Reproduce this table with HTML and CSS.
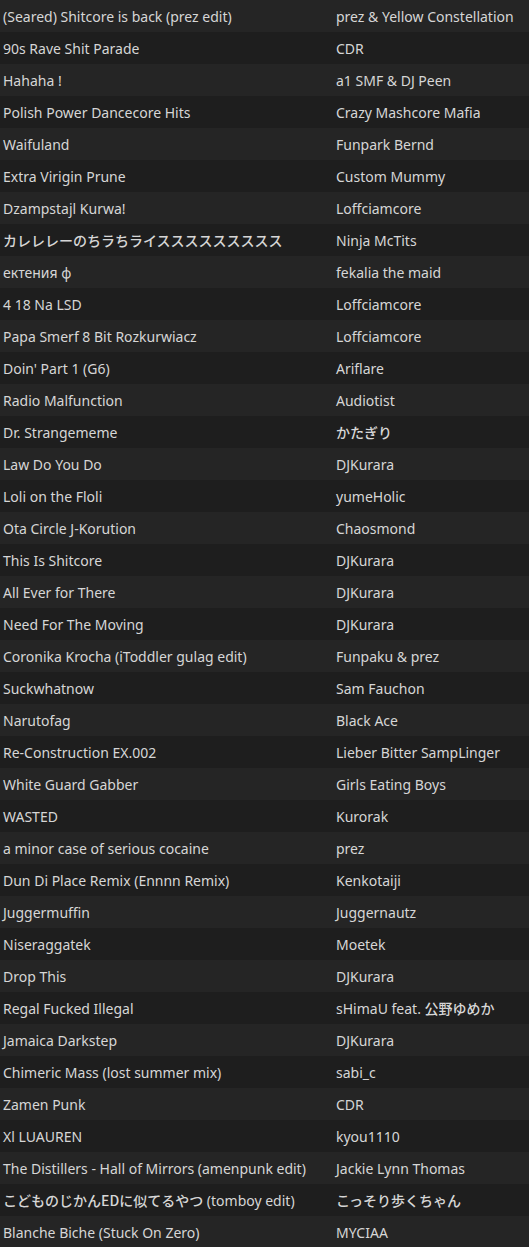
FILE: index.html
```html
<!DOCTYPE html>
<html lang="en">
<head>
<meta charset="utf-8">
<title>Tracks</title>
<link rel="stylesheet" href="styles.css">
</head>
<body>
<div class="tracks">
  <div class="row"><span class="title">(Seared) Shitcore is back (prez edit)</span><span class="artist">prez &amp; Yellow Constellation</span></div>
  <div class="row"><span class="title">90s Rave Shit Parade</span><span class="artist">CDR</span></div>
  <div class="row"><span class="title">Hahaha !</span><span class="artist">a1 SMF &amp; DJ Peen</span></div>
  <div class="row"><span class="title">Polish Power Dancecore Hits</span><span class="artist">Crazy Mashcore Mafia</span></div>
  <div class="row"><span class="title">Waifuland</span><span class="artist">Funpark Bernd</span></div>
  <div class="row"><span class="title">Extra Virigin Prune</span><span class="artist">Custom Mummy</span></div>
  <div class="row"><span class="title">Dzampstajl Kurwa!</span><span class="artist">Loffciamcore</span></div>
  <div class="row"><span class="title"><span class="jp">カレレレーのちラちライススススススススス</span></span><span class="artist">Ninja McTits</span></div>
  <div class="row"><span class="title">ектения ɸ</span><span class="artist">fekalia the maid</span></div>
  <div class="row"><span class="title">4 18 Na LSD</span><span class="artist">Loffciamcore</span></div>
  <div class="row"><span class="title">Papa Smerf 8 Bit Rozkurwiacz</span><span class="artist">Loffciamcore</span></div>
  <div class="row"><span class="title">Doin' Part 1 (G6)</span><span class="artist">Ariflare</span></div>
  <div class="row"><span class="title">Radio Malfunction</span><span class="artist">Audiotist</span></div>
  <div class="row"><span class="title">Dr. Strangememe</span><span class="artist"><span class="jp">かたぎり</span></span></div>
  <div class="row"><span class="title">Law Do You Do</span><span class="artist">DJKurara</span></div>
  <div class="row"><span class="title">Loli on the Floli</span><span class="artist">yumeHolic</span></div>
  <div class="row"><span class="title">Ota Circle J-Korution</span><span class="artist">Chaosmond</span></div>
  <div class="row"><span class="title">This Is Shitcore</span><span class="artist">DJKurara</span></div>
  <div class="row"><span class="title">All Ever for There</span><span class="artist">DJKurara</span></div>
  <div class="row"><span class="title">Need For The Moving</span><span class="artist">DJKurara</span></div>
  <div class="row"><span class="title">Coronika Krocha (iToddler gulag edit)</span><span class="artist">Funpaku &amp; prez</span></div>
  <div class="row"><span class="title">Suckwhatnow</span><span class="artist">Sam Fauchon</span></div>
  <div class="row"><span class="title">Narutofag</span><span class="artist">Black Ace</span></div>
  <div class="row"><span class="title">Re-Construction EX.002</span><span class="artist">Lieber Bitter SampLinger</span></div>
  <div class="row"><span class="title">White Guard Gabber</span><span class="artist">Girls Eating Boys</span></div>
  <div class="row"><span class="title">WASTED</span><span class="artist">Kurorak</span></div>
  <div class="row"><span class="title">a minor case of serious cocaine</span><span class="artist">prez</span></div>
  <div class="row"><span class="title">Dun Di Place Remix (Ennnn Remix)</span><span class="artist">Kenkotaiji</span></div>
  <div class="row"><span class="title">Juggermuffin</span><span class="artist">Juggernautz</span></div>
  <div class="row"><span class="title">Niseraggatek</span><span class="artist">Moetek</span></div>
  <div class="row"><span class="title">Drop This</span><span class="artist">DJKurara</span></div>
  <div class="row"><span class="title">Regal Fucked Illegal</span><span class="artist">sHimaU feat. <span class="jp">公野ゆめか</span></span></div>
  <div class="row"><span class="title">Jamaica Darkstep</span><span class="artist">DJKurara</span></div>
  <div class="row"><span class="title">Chimeric Mass (lost summer mix)</span><span class="artist">sabi_c</span></div>
  <div class="row"><span class="title">Zamen Punk</span><span class="artist">CDR</span></div>
  <div class="row"><span class="title">Xl LUAUREN</span><span class="artist">kyou1110</span></div>
  <div class="row"><span class="title">The Distillers - Hall of Mirrors (amenpunk edit)</span><span class="artist">Jackie Lynn Thomas</span></div>
  <div class="row"><span class="title"><span class="jp">こどものじかんEDに似てるやつ</span> (tomboy edit)</span><span class="artist"><span class="jp">こっそり歩くちゃん</span></span></div>
  <div class="row"><span class="title">Blanche Biche (Stuck On Zero)</span><span class="artist">MYCIAA</span></div>
</div>
</body>
</html>
```
FILE: styles.css
```css
html, body {
  margin: 0;
  padding: 0;
  background: #1e1e1e;
}
body {
  font-family: "Noto Sans", "Open Sans", "Noto Sans CJK JP", sans-serif;
  font-size: 14px;
  color: #d6d6d6;
}
.tracks {
  display: flex;
  flex-direction: column;
}
.row {
  display: grid;
  grid-template-columns: 332px 1fr;
  height: 32px;
  align-items: center;
  background: #1e1e1e;
}
.row:nth-child(odd) {
  background: #252525;
}
.title, .artist {
  padding-left: 3px;
  white-space: nowrap;
  overflow: hidden;
}
.artist {
  padding-left: 4px;
}
.jp {
  font-family: "Noto Sans CJK JP", sans-serif;
  font-weight: 500;
}
```
